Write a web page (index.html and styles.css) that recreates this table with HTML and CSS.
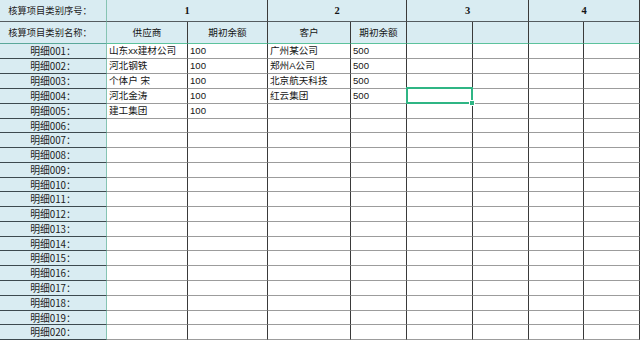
FILE: index.html
```html
<!DOCTYPE html>
<html lang="zh-CN">
<head>
<meta charset="utf-8">
<title>核算项目</title>
<link rel="stylesheet" href="styles.css">
</head>
<body>
<div class="sheet">
  <div class="lab hd1">核算项目类别序号：</div>
  <div class="hd1 span num">1</div>
  <div class="hd1 span num">2</div>
  <div class="hd1 span num">3</div>
  <div class="hd1 span num">4</div>

  <div class="lab hd2">核算项目类别名称：</div>
  <div class="hd2">供应商</div>
  <div class="hd2">期初余额</div>
  <div class="hd2">客户</div>
  <div class="hd2">期初余额</div>
  <div class="hd2"></div><div class="hd2"></div><div class="hd2"></div><div class="hd2"></div>

  <div class="lab">明细001：</div>
  <div class="c">山东xx建材公司</div><div class="c">100</div><div class="c">广州某公司</div><div class="c">500</div>
  <div class="c"></div><div class="c"></div><div class="c"></div><div class="c"></div>

  <div class="lab">明细002：</div>
  <div class="c">河北钢铁</div><div class="c">100</div><div class="c">郑州A公司</div><div class="c">500</div>
  <div class="c"></div><div class="c"></div><div class="c"></div><div class="c"></div>

  <div class="lab">明细003：</div>
  <div class="c">个体户 宋</div><div class="c">100</div><div class="c">北京航天科技</div><div class="c">500</div>
  <div class="c"></div><div class="c"></div><div class="c"></div><div class="c"></div>

  <div class="lab">明细004：</div>
  <div class="c">河北金涛</div><div class="c">100</div><div class="c">红云集团</div><div class="c">500</div>
  <div class="c sel"></div><div class="c"></div><div class="c"></div><div class="c"></div>

  <div class="lab">明细005：</div>
  <div class="c">建工集团</div><div class="c">100</div><div class="c"></div><div class="c"></div>
  <div class="c"></div><div class="c"></div><div class="c"></div><div class="c"></div>

  <div class="lab">明细006：</div>
  <div class="c"></div><div class="c"></div><div class="c"></div><div class="c"></div><div class="c"></div><div class="c"></div><div class="c"></div><div class="c"></div>
  <div class="lab">明细007：</div>
  <div class="c"></div><div class="c"></div><div class="c"></div><div class="c"></div><div class="c"></div><div class="c"></div><div class="c"></div><div class="c"></div>
  <div class="lab">明细008：</div>
  <div class="c"></div><div class="c"></div><div class="c"></div><div class="c"></div><div class="c"></div><div class="c"></div><div class="c"></div><div class="c"></div>
  <div class="lab">明细009：</div>
  <div class="c"></div><div class="c"></div><div class="c"></div><div class="c"></div><div class="c"></div><div class="c"></div><div class="c"></div><div class="c"></div>
  <div class="lab">明细010：</div>
  <div class="c"></div><div class="c"></div><div class="c"></div><div class="c"></div><div class="c"></div><div class="c"></div><div class="c"></div><div class="c"></div>
  <div class="lab">明细011：</div>
  <div class="c"></div><div class="c"></div><div class="c"></div><div class="c"></div><div class="c"></div><div class="c"></div><div class="c"></div><div class="c"></div>
  <div class="lab">明细012：</div>
  <div class="c"></div><div class="c"></div><div class="c"></div><div class="c"></div><div class="c"></div><div class="c"></div><div class="c"></div><div class="c"></div>
  <div class="lab">明细013：</div>
  <div class="c"></div><div class="c"></div><div class="c"></div><div class="c"></div><div class="c"></div><div class="c"></div><div class="c"></div><div class="c"></div>
  <div class="lab">明细014：</div>
  <div class="c"></div><div class="c"></div><div class="c"></div><div class="c"></div><div class="c"></div><div class="c"></div><div class="c"></div><div class="c"></div>
  <div class="lab">明细015：</div>
  <div class="c"></div><div class="c"></div><div class="c"></div><div class="c"></div><div class="c"></div><div class="c"></div><div class="c"></div><div class="c"></div>
  <div class="lab">明细016：</div>
  <div class="c"></div><div class="c"></div><div class="c"></div><div class="c"></div><div class="c"></div><div class="c"></div><div class="c"></div><div class="c"></div>
  <div class="lab">明细017：</div>
  <div class="c"></div><div class="c"></div><div class="c"></div><div class="c"></div><div class="c"></div><div class="c"></div><div class="c"></div><div class="c"></div>
  <div class="lab">明细018：</div>
  <div class="c"></div><div class="c"></div><div class="c"></div><div class="c"></div><div class="c"></div><div class="c"></div><div class="c"></div><div class="c"></div>
  <div class="lab">明细019：</div>
  <div class="c"></div><div class="c"></div><div class="c"></div><div class="c"></div><div class="c"></div><div class="c"></div><div class="c"></div><div class="c"></div>
  <div class="lab">明细020：</div>
  <div class="c"></div><div class="c"></div><div class="c"></div><div class="c"></div><div class="c"></div><div class="c"></div><div class="c"></div><div class="c"></div>
  <div class="lab"></div>
  <div class="c"></div><div class="c"></div><div class="c"></div><div class="c"></div><div class="c"></div><div class="c"></div><div class="c"></div><div class="c"></div>
</div>
</body>
</html>
```

FILE: styles.css
```css
html, body {
  margin: 0;
  padding: 0;
  background: #ffffff;
  overflow: hidden;
}

.sheet {
  display: grid;
  grid-template-columns: 107px 81px 80px 83px 56px 66px 56px 55px 56px;
  grid-template-rows: 22px 22px 15px 15px 15px 15px 15px 14px 15px 15px 15px 14px 15px 15px 15px 14px 15px 15px 15px 15px 14px 15px 15px;
  width: 640px;
  height: 340px;
  overflow: hidden;
  font-family: "Liberation Sans", "Noto Sans CJK SC", sans-serif;
  font-size: 9.6px;
  color: #151515;
}

.sheet > div {
  box-sizing: border-box;
  overflow: hidden;
  white-space: nowrap;
}

.lab {
  background: #d9ecf2;
  border-right: 1px solid #86c4b3;
  border-bottom: 1px solid #3d4a4f;
  text-align: center;
  line-height: 14px;
  color: #222222;
  font-family: "Noto Sans CJK SC", sans-serif;
  font-size: 9.8px;
}

.hd1, .hd2 {
  background: #d9ecf2;
  border-right: 1px solid #3a3a3a;
  text-align: center;
}

.hd1 {
  border-bottom: 1px solid #555c60;
  line-height: 21px;
}

.hd2 {
  border-bottom: 1px solid #5cc29c;
  line-height: 21px;
}

.lab.hd1, .lab.hd2 {
  border-right: 1px solid #86c4b3;
  line-height: 21px;
  font-size: 9.3px;
  padding-right: 6px;
}

.lab.hd2 {
  border-bottom: 1px solid #5aa89a;
}

.span {
  grid-column: span 2;
}

.num {
  font-family: "Liberation Serif", serif;
  font-weight: bold;
  font-size: 10.5px;
}

.c {
  border-right: 1px solid #3a3a3a;
  border-bottom: 1px solid #9c9c9c;
  padding-left: 2px;
  line-height: 14px;
}

.sel {
  position: relative;
  overflow: visible !important;
}

.sel::after {
  content: "";
  position: absolute;
  left: -1px;
  top: -2px;
  right: -1px;
  bottom: -1px;
  border: 2px solid #2fb584;
  z-index: 2;
}

.sel::before {
  content: "";
  position: absolute;
  right: -3px;
  bottom: -3px;
  width: 4px;
  height: 4px;
  background: #2fb584;
  border: 1px solid #ffffff;
  z-index: 3;
}
```
